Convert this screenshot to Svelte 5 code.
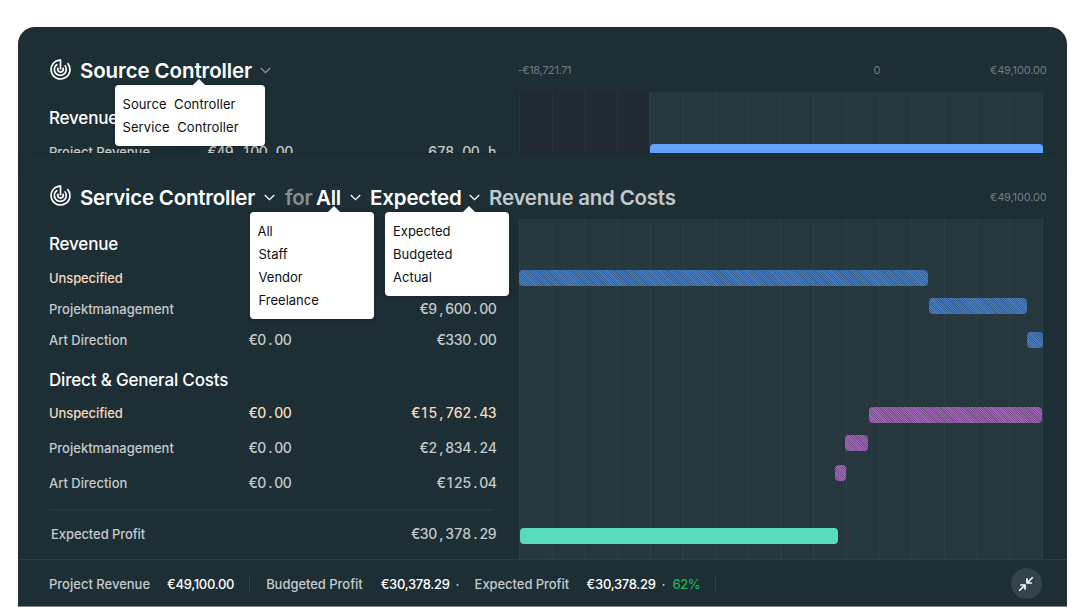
<script>
	const scopes = ['All', 'Staff', 'Vendor', 'Freelance'];
	const stages = ['Expected', 'Budgeted', 'Actual'];

	const sections = [
		{
			title: 'Revenue',
			rows: [
				{ label: 'Unspecified', open: '', total: '', accent: true, gap: 12 },
				{ label: 'Projektmanagement', open: '', total: '€9,600.00', gap: 11 },
				{ label: 'Art Direction', open: '€0.00', total: '€330.00', gap: 11 }
			]
		},
		{
			title: 'Direct & General Costs',
			rows: [
				{ label: 'Unspecified', open: '€0.00', total: '€15,762.43', accent: true, gap: 11 },
				{ label: 'Projektmanagement', open: '€0.00', total: '€2,834.24', gap: 15 },
				{ label: 'Art Direction', open: '€0.00', total: '€125.04', gap: 15 }
			]
		}
	];

	// start and width along the axis, gap is the space above the bar
	const bars = [
		{ kind: 'revenue', start: 0, width: 409, gap: 51 },
		{ kind: 'revenue', start: 410, width: 98, gap: 12 },
		{ kind: 'revenue', start: 508, width: 16, gap: 18 },
		{ kind: 'cost', start: 350, width: 173, gap: 59 },
		{ kind: 'cost', start: 326, width: 23, gap: 12 },
		{ kind: 'cost', start: 316, width: 11, gap: 14 },
		{ kind: 'profit', start: 1, width: 318, gap: 47 }
	];
</script>

{#snippet logo()}
	<svg class="logo" viewBox="0 0 20 20" aria-hidden="true">
		<path d="M10 10V1a9 9 0 1 0 6.600 2.900" />
		<path d="M7 4.900a5.700 5.700 0 1 0 7 1.100" />
		<path d="M7.900 8.300a2.600 2.600 0 1 0 4.200 0" />
	</svg>
{/snippet}

{#snippet chevron()}
	<svg class="chevron" viewBox="0 0 11 7" aria-hidden="true"><path d="M.8 1l4.700 4.600L10.200 1" /></svg>
{/snippet}

{#snippet money(value)}
	<span class="money">{#each value as char}<i>{char}</i>{/each}</span>
{/snippet}

<main class="board">
	<section class="panel source">
		<header>
			{@render logo()}
			<div class="picker source-picker">
				<h1>Source Controller</h1>
				{@render chevron()}
				<ul class="menu wide">
					<li>Source&nbsp; Controller</li>
					<li>Service&nbsp; Controller</li>
				</ul>
			</div>
			<div class="axis">
				<span class="min">-€18,721.71</span>
				<span class="zero">0</span>
				<span>€49,100.00</span>
			</div>
		</header>
		<div class="body">
			<div class="table">
				<h2>Revenue</h2>
				<div class="row" style:margin-top="12px">
					<span class="label">Project Revenue</span>
					<span class="early">{@render money('€49,100.00')}</span>
					{@render money('678.00 h')}
				</div>
			</div>
			<div class="chart with-loss">
				<div class="bar total"></div>
			</div>
		</div>
	</section>

	<section class="panel service">
		<header>
			{@render logo()}
			<div class="picker service-picker">
				<h1>Service Controller</h1>
				{@render chevron()}
			</div>
			<span class="word faint">for</span>
			<div class="picker scope-picker">
				<h1>All</h1>
				{@render chevron()}
				<ul class="menu scope">
					{#each scopes as scope}
						<li>{scope}</li>
					{/each}
				</ul>
			</div>
			<div class="picker stage-picker">
				<h1>Expected</h1>
				{@render chevron()}
				<ul class="menu stage">
					{#each stages as stage}
						<li>{stage}</li>
					{/each}
				</ul>
			</div>
			<span class="word">Revenue and Costs</span>
			<div class="axis end"><span>€49,100.00</span></div>
		</header>
		<div class="body">
			<div class="table">
				{#each sections as section}
					<h2>{section.title}</h2>
					{#each section.rows as row}
						<div class="row" class:accent={row.accent} style:margin-top="{row.gap}px">
							<span class="label">{row.label}</span>
							{@render money(row.open)}
							{@render money(row.total)}
						</div>
					{/each}
				{/each}
				<hr />
				<div class="row profit-row">
					<span class="label">Expected Profit</span>
					<span></span>
					{@render money('€30,378.29')}
				</div>
			</div>
			<div class="chart">
				{#each bars as bar}
					<div
						class="bar {bar.kind}"
						style:margin-top="{bar.gap}px"
						style:margin-left="{bar.start}px"
						style:width="{bar.width}px"
					></div>
				{/each}
			</div>
		</div>
	</section>

	<footer>
		<span class="name n1">Project Revenue</span>
		<strong>€49,100.00</strong>
		<span class="rule"></span>
		<span class="name n2">Budgeted Profit</span>
		<strong>€30,378.29</strong>
		<span class="dot first">·</span>
		<span class="name n3">Expected Profit</span>
		<strong>€30,378.29</strong>
		<span class="dot">·</span>
		<span class="share">62%</span>
		<span class="rule"></span>
		<button type="button" aria-label="Collapse">
			<svg viewBox="0 0 16 16" aria-hidden="true">
				<path d="M14.800 1.200L9.500 6.500M9 2.200V7h4.800M1.200 14.800l5.300-5.300M2.200 9H7v4.800" />
			</svg>
		</button>
	</footer>
</main>

<style>
	:global(body) {
		background: #fff;
	}

	.board {
		width: 1048.5px;
		height: 580px;
		margin: 27px 0 0 18px;
		display: flex;
		flex-direction: column;
		border-radius: 17px 17px 0 0;
		background: #1d2e34;
		color: #c5cacb;
		font-family: Inter, 'Liberation Sans', sans-serif;
		font-size: 13px;
		font-weight: 500;
		overflow: hidden;
	}

	.panel {
		display: flex;
		flex-direction: column;
		box-sizing: border-box;
	}

	.source {
		height: 126px;
	}

	.service {
		height: 406px;
		border-radius: 17px 17px 0 0;
		background: #1d2e34;
		box-shadow: inset 0 1px 0 #19292e;
		position: relative;
	}

	header {
		height: 66px;
		flex: none;
		box-sizing: border-box;
		padding: 22px 20px 0 31px;
		display: flex;
		align-items: center;
	}

	.source header {
		height: 65px;
	}

	.logo {
		width: 21px;
		height: 21px;
		margin: -3px 9px 0 1px;
		fill: none;
		stroke: #fff;
		stroke-width: 1.6;
		flex: none;
	}

	.chevron {
		width: 11px;
		height: 7px;
		fill: none;
		stroke: #fff;
		stroke-width: 1.3;
	}

	.source .chevron {
		stroke: #8e979a;
	}

	.picker {
		position: relative;
		flex: none;
		display: flex;
		align-items: center;
		justify-content: space-between;
	}

	.source-picker {
		width: 191px;
	}

	.service-picker {
		width: 194.5px;
		margin-right: 10.5px;
	}

	.scope-picker {
		width: 44.5px;
		margin-right: 9.5px;
	}

	.stage-picker {
		width: 109.5px;
		margin-right: 9.5px;
	}

	h1,
	.word {
		margin: 0;
		color: #fff;
		font-size: 20.5px;
		font-weight: 580;
		line-height: 26px;
		letter-spacing: -0.22px;
		white-space: nowrap;
	}

	.source h1 {
		letter-spacing: -0.1px;
	}

	.service .stage-picker h1 {
		letter-spacing: -0.16px;
	}

	.service h1,
	.service .word {
		padding-top: 1px;
	}

	.word {
		color: #c3c8ca;
	}

	.faint {
		width: 31px;
		color: #858e91;
		letter-spacing: -0.2px;
	}

	.menu {
		position: absolute;
		z-index: 2;
		top: 28px;
		box-sizing: border-box;
		margin: 0;
		padding: 8px 8px 7px;
		border-radius: 4px;
		background: #fff;
		color: #0c1012;
		font-weight: 400;
		line-height: 23px;
		list-style: none;
		box-shadow: 0 1px 5px rgba(0, 0, 0, 0.2);
	}

	.menu::before {
		content: '';
		position: absolute;
		top: -6px;
		left: var(--tip);
		border: 6px solid transparent;
		border-top: 0;
		border-bottom-color: #fff;
	}

	.menu li {
		white-space: pre;
	}

	.wide {
		--tip: 78px;
		top: 27px;
		left: 35px;
		width: 150px;
		padding-left: 7.5px;
		letter-spacing: 0.1px;
	}

	.scope {
		--tip: 78px;
		left: -66px;
		width: 124px;
		padding-left: 7.5px;
	}

	.scope li + li {
		padding-left: 1px;
	}

	.stage {
		--tip: 78px;
		left: 15px;
		width: 124px;
	}

	.axis {
		width: 529px;
		margin-left: auto;
		display: grid;
		grid-template-columns: 1fr 1fr 1fr;
		color: #717c80;
		font-size: 11px;
		font-weight: 400;
		line-height: 16px;
		letter-spacing: -0.15px;
	}

	.source .axis {
		margin-top: -1px;
	}

	.min {
		letter-spacing: -0.35px;
	}

	.axis span:last-child {
		text-align: right;
	}

	.zero {
		padding-left: 178px;
		margin-right: -10px;
		text-indent: 2px;
	}

	.end {
		width: auto;
		display: block;
	}

	.body {
		flex: 1;
		min-height: 0;
		display: flex;
		overflow: hidden;
	}

	.table {
		width: 447px;
		margin: 0 23px 0 31px;
		flex: none;
	}

	h2 {
		margin: 13px 0 0;
		color: #fff;
		font-size: 17px;
		font-weight: 550;
		line-height: 24px;
		letter-spacing: -0.18px;
	}

	.source h2 {
		margin-top: 14px;
	}

	.row + h2 {
		margin-top: 18px;
	}

	.row {
		height: 20px;
		display: grid;
		grid-template-columns: 200px 44px 1fr;
		align-items: center;
		line-height: 20px;
	}

	.row .money:last-child {
		justify-self: end;
		margin-right: -0.5px;
	}

	.accent {
		color: #f6d9be;
	}

	.accent .label {
		letter-spacing: -0.1px;
	}

	.early {
		margin-left: -45px;
	}

	.money {
		display: flex;
		font-size: 14px;
	}

	.row .early .money {
		margin-right: 0;
	}

	.money i {
		width: 8.5px;
		display: flex;
		justify-content: center;
		font-style: normal;
		white-space: pre;
	}

	hr {
		width: 445px;
		height: 2px;
		margin: 16px 0 0;
		border: 0;
		background: #26383e;
	}

	.profit-row {
		margin-top: 13px;
	}

	.profit-row .label {
		padding-left: 2px;
		letter-spacing: -0.08px;
	}

	.chart {
		width: 524px;
		display: flex;
		flex-direction: column;
		background-color: #26383e;
		background-image: linear-gradient(90deg, #2e4046 1px, transparent 1px);
		background-size: 32.7px 100%;
	}

	.with-loss {
		background:
			linear-gradient(90deg, rgba(70, 90, 96, 0.2) 1px, transparent 1px) 0 0 / 32.7px 100%,
			linear-gradient(90deg, #222a31 130px, #26383e 130px);
	}

	.bar {
		height: 16px;
		flex: none;
		border-radius: 4px;
	}

	.total {
		margin: 52px 0 0 131px;
		background: #61a3ff;
	}

	.revenue {
		background: repeating-linear-gradient(45deg, #355f91 0 0.8px, #4b80c2 0.8px 1.6px);
	}

	.cost {
		background: repeating-linear-gradient(45deg, #744e88 0 0.8px, #a369ba 0.8px 1.6px);
	}

	.profit {
		background: #57dcba;
	}

	footer {
		height: 48px;
		box-sizing: border-box;
		padding: 1px 25px 0 31px;
		display: flex;
		align-items: center;
		position: relative;
		border-top: 1px solid #2d3f45;
		border-bottom: 1px solid #7c888c;
		background: #1d2e34;
		white-space: nowrap;
	}

	.name {
		flex: none;
	}

	.n1 {
		width: 118px;
	}

	.n2 {
		width: 114.5px;
		letter-spacing: -0.04px;
	}

	.n3 {
		width: 112px;
		letter-spacing: -0.06px;
	}

	footer strong {
		color: #fff;
		font-weight: 550;
		letter-spacing: -0.3px;
	}

	.rule {
		width: 1px;
		height: 14px;
		margin: 0 15px;
		background: #34464c;
	}

	.n1 + strong + .rule {
		margin-right: 16px;
	}

	.dot {
		width: 11px;
		padding-left: 6px;
	}

	.first {
		width: 19px;
	}

	.share {
		color: #20b455;
		letter-spacing: -0.5px;
	}

	button {
		width: 31px;
		height: 31px;
		margin-left: auto;
		padding: 0;
		display: grid;
		place-items: center;
		border: 0;
		border-radius: 50%;
		background: #33444a;
	}

	button svg {
		width: 16px;
		height: 16px;
		fill: none;
		stroke: #fff;
		stroke-width: 1.6;
	}
</style>
